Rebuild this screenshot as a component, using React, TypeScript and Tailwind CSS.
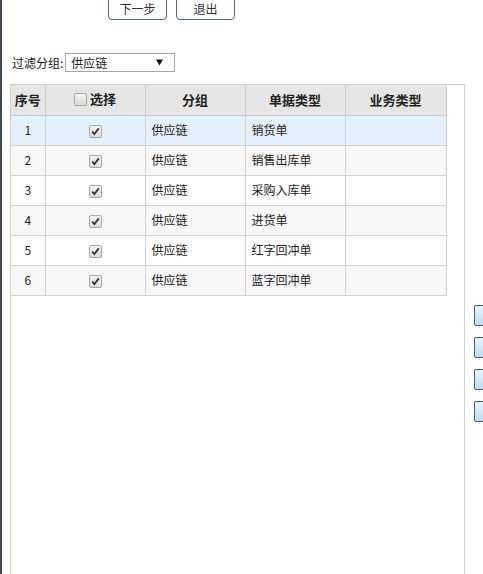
import React from "react";

const rows = [
  { n: 1, g: "供应链", t: "销货单" },
  { n: 2, g: "供应链", t: "销售出库单" },
  { n: 3, g: "供应链", t: "采购入库单" },
  { n: 4, g: "供应链", t: "进货单" },
  { n: 5, g: "供应链", t: "红字回冲单" },
  { n: 6, g: "供应链", t: "蓝字回冲单" },
];

function Check({ checked }: { checked: boolean }) {
  return (
    <span className="inline-flex h-[13px] w-[13px] items-center justify-center rounded-[2px] border border-[#a8a8a8] bg-gradient-to-b from-[#f4f4f4] to-[#dcdcdc] align-middle">
      {checked && (
        <svg width="9" height="9" viewBox="0 0 9 9">
          <path d="M1.2 4.6 L3.4 7 L7.8 1.4" fill="none" stroke="#333" strokeWidth="1.8" />
        </svg>
      )}
    </span>
  );
}

export default function App() {
  const rowBg = (i: number) =>
    i === 0 ? "bg-[#e4f0fc]" : i % 2 === 1 ? "bg-[#f7f7f7]" : "bg-white";
  return (
    <div
      className="relative h-[574px] w-[483px] overflow-hidden border-l-2 border-[#3f4a55] bg-white text-[12px] text-[#222]"
      style={{ fontFamily: '"Microsoft YaHei", "Noto Sans CJK SC", "Liberation Sans", sans-serif' }}
    >
      <div className="mt-[-5px] flex gap-[9px] pl-[106px]">
        <button className="h-[25px] w-[59px] rounded-[4px] border border-[#4d6b78] bg-white pt-[3px] text-[12px] leading-none text-[#333]">
          下一步
        </button>
        <button className="h-[25px] w-[59px] rounded-[4px] border border-[#4d6b78] bg-white pt-[3px] text-[12px] leading-none text-[#333]">
          退出
        </button>
      </div>
      <div className="mt-[33px] flex items-center pl-[10px]">
        <span className="text-[12px]">过滤分组:</span>
        <div className="ml-[2px] flex h-[19px] w-[110px] items-center justify-between border border-[#a6a6a6] bg-white pl-[5px] pr-[11px]">
          <span>供应链</span>
          <svg width="7" height="7" viewBox="0 0 7 7">
            <path d="M0 0.5 H7 L3.5 6.5 Z" fill="#111" />
          </svg>
        </div>
      </div>
      <div className="ml-[8px] mt-[12px] h-[600px] w-[455px] border border-[#cfcfcf]">
        <table className="w-[435px] border-collapse table-fixed">
          <colgroup>
            <col className="w-[34px]" />
            <col className="w-[100px]" />
            <col className="w-[100px]" />
            <col className="w-[100px]" />
            <col className="w-[101px]" />
          </colgroup>
          <thead>
            <tr className="h-[30px] bg-[#e6e6e6] text-[13px] font-bold">
              <th className="border border-t-0 border-l-0 border-[#cdcdcd]">序号</th>
              <th className="border border-t-0 border-[#cdcdcd]">
                <span className="inline-flex items-center gap-[3px]">
                  <Check checked={false} />
                  选择
                </span>
              </th>
              <th className="border border-t-0 border-[#cdcdcd]">分组</th>
              <th className="border border-t-0 border-[#cdcdcd]">单据类型</th>
              <th className="border border-t-0 border-[#cdcdcd]">业务类型</th>
            </tr>
          </thead>
          <tbody>
            {rows.map((r, i) => (
              <tr key={r.n} className={`h-[30px] ${rowBg(i)}`}>
                <td className="border border-l-0 border-[#d3d3d3] text-center">{r.n}</td>
                <td className="border border-[#d3d3d3] text-center">
                  <Check checked={true} />
                </td>
                <td className="border border-[#d3d3d3] pl-[6px]">{r.g}</td>
                <td className="border border-[#d3d3d3] pl-[6px]">{r.t}</td>
                <td className="border border-[#d3d3d3]"></td>
              </tr>
            ))}
          </tbody>
        </table>
      </div>
      <div className="absolute left-[472px] top-[305px] flex flex-col gap-[11px]">
        {[0, 1, 2, 3].map((k) => (
          <div
            key={k}
            className="h-[21px] w-[20px] rounded-[2px] border border-[#4a5d68] bg-gradient-to-b from-[#eaf4fc] to-[#bfdcf3]"
          />
        ))}
      </div>
    </div>
  );
}
